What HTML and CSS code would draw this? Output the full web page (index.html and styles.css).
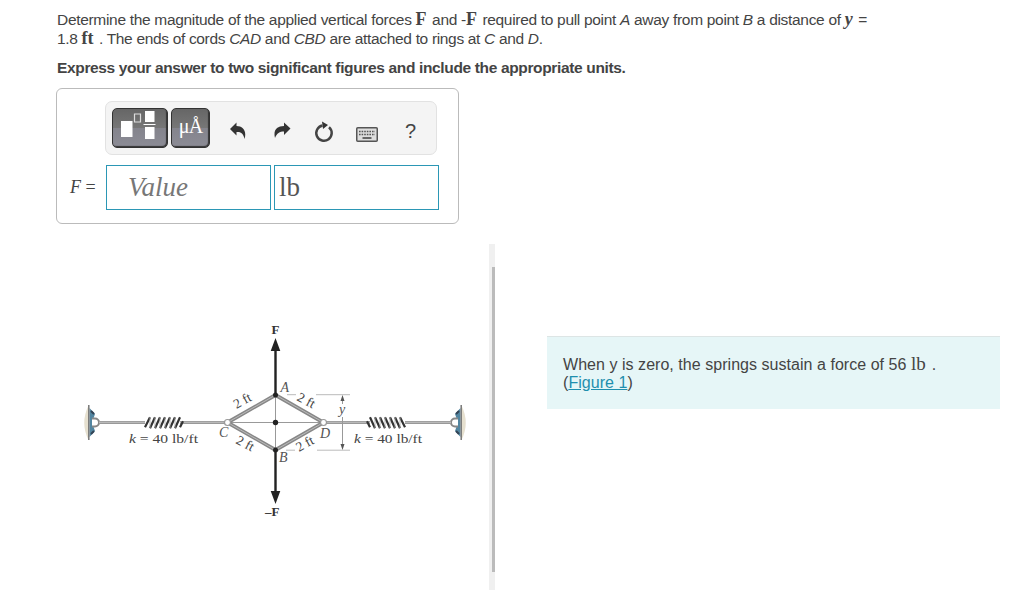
FILE: index.html
```html
<!DOCTYPE html>
<html lang="en">
  <head>
    <meta charset="UTF-8" />
    <meta name="viewport" content="width=device-width, initial-scale=1.0" />
    <title>Spring forces</title>
    <link rel="stylesheet" href="styles.css">
  </head>
  <body>
    <main>
      <section class="question">
        <p class="line1">Determine the magnitude of the applied vertical forces <b class="math">F</b> and -<b class="math">F</b> required to pull point <i>A</i> away from point <i>B</i> a distance of <b class="math"><i>y</i></b> =</p>
        <p class="line2">1.8 <b class="math">ft</b> . The ends of cords <i>CAD</i> and <i>CBD</i> are attached to rings at <i>C</i> and <i>D</i>.</p>
        <p class="express">Express your answer to two significant figures and include the appropriate units.</p>
      </section>
      <section class="answer">
        <div class="toolbar">
          <button class="dark template" aria-label="templates">
            <svg width="54" height="38" viewBox="0 0 54 38">
              <path fill="#fff" d="M8 12h11.500v16H8zM32 2h9.500v11h-9.500zM32 18h9.500v12h-9.500zM30.500 15h12v1h-12z" />
              <path fill="none" stroke="#ddd" stroke-width="1.200" d="M21.500 5h6v8h-6z" />
            </svg>
          </button>
          <button class="dark units">μÅ</button>
          <button class="tool undo" aria-label="undo">
            <svg width="16" height="18" viewBox="0 0 16 18"><path d="M0 7 6.500 0.500V4C13 4 17 9 14.500 17 13.500 11.500 11 9.500 6.500 10v3.500z" /></svg>
          </button>
          <button class="tool redo" aria-label="redo">
            <svg width="17" height="17" viewBox="0 0 17 17"><path d="M16.500 6.500 10 .5V4C3 4-1 8 1 16 3 11 5.500 9.500 10 9.500V13z" /></svg>
          </button>
          <button class="tool reset" aria-label="reset">
            <svg width="20" height="22" viewBox="0 0 20 22">
              <path fill="none" stroke="#444" stroke-width="2.500" d="M15 6.200A7.700 7.700 0 1 1 8.500 4.500" />
              <path d="m8 .5 6 3.500-5 4z" />
            </svg>
          </button>
          <button class="tool keys" aria-label="keyboard">
            <svg width="22" height="15" viewBox="0 0 22 15">
              <rect x=".75" y=".75" width="20.500" height="13.500" rx="1" fill="#ddd" stroke="#555" stroke-width="1.500" />
              <path fill="none" stroke="#555" stroke-width="1.600" stroke-dasharray="1.600 1" d="M3 4.500h16M3 7.500h16" />
              <path fill="none" stroke="#666" stroke-width="2" d="M6.500 11h9" />
            </svg>
          </button>
          <button class="tool help">?</button>
        </div>
        <div class="fields">
          <span class="label"><i>F</i> =</span>
          <div class="field value">Value</div>
          <div class="field lb">lb</div>
        </div>
      </section>
      <section class="lower">
        <div class="figure">
          <svg width="433" height="346" viewBox="56 244 433 346">
            <defs>
              <g id="wall">
                <path d="M88.500 405.500Q80 423 88.500 440z" fill="#e6e0cf" />
                <path d="M89.500 408 95 414 92 422.500 95 431 89.500 437z" fill="#5285a0" />
                <path d="M88.800 405v35" stroke="#777" stroke-width="1.500" />
                <path d="M92 418.500h3a4 4 0 0 1 0 8h-3" fill="#fff" stroke="#888" stroke-width="2" />
                <path d="m91 411 3 3M91 434l3-3" stroke="#345" stroke-width="2" />
              </g>
              <g id="spring">
                <path d="M99 422.500h46M180 422.500h45" stroke="#999" stroke-width="2.800" />
                <path d="M99 422.300h46M180 422.300h45" stroke="#ccc" stroke-width=".8" />
                <path d="m145 427 5-10m0 11 5-11m0 11 5-11m0 11 5-11m0 11 5-11m0 11 5-11m0 11 5-11m0 10 3-6" stroke="#333" stroke-width="2.200" transform="translate(0 .3)" />
                <path d="m150 417 0 11m5-11 0 11m5-11 0 11m5-11 0 11m5-11 0 11m5-11 0 11" stroke="#aaa" stroke-width=".8" />
              </g>
            </defs>
            <use href="#wall" />
            <use href="#spring" />
            <use href="#wall" transform="matrix(-1 0 0 1 550 0)" />
            <use href="#spring" transform="matrix(-1 0 0 1 550 0)" />
            <path d="M228 422.500h96M275.500 394v56" stroke="#999" />
            <path d="M287 394.700h9M316 394.700h34M286 450.200h9M317 450.200h33" stroke="#bbb" />
            <path d="M342.500 399v5M342.500 417v29" stroke="#999" />
            <path d="m340.500 401 2-6 2 6zM340.500 444l2 6 2-6z" fill="#555" />
            <path d="M227.500 422.500 275.500 395l48 27.500-48 27.500z" fill="none" stroke="#888" stroke-width="3.800" />
            <path d="M227.500 422.500 275.500 395l48 27.500-48 27.500z" fill="none" stroke="#bbb" stroke-width="1" />
            <path d="M275.500 395v-47M275.500 450v45" stroke="#222" stroke-width="2.400" />
            <path d="m270.700 351 4.800-13 4.800 13zM270.700 491l4.800 13 4.800-13z" fill="#222" />
            <g fill="#222"><circle cx="275.500" cy="395" r="2.500" /><circle cx="275.500" cy="422.500" r="2.700" /><circle cx="275.500" cy="450" r="2.500" /></g>
            <g fill="#fff" stroke="#999" stroke-width="1.200"><circle cx="227.500" cy="422.500" r="3" /><circle cx="323.500" cy="422.500" r="3" /></g>
            <g class="names">
              <text x="280.500" y="391.500">A</text>
              <text x="279" y="462">B</text>
              <text x="219" y="437">C</text>
              <text x="320" y="438">D</text>
              <text x="339" y="414">y</text>
            </g>
            <g class="sizes">
              <text transform="translate(236.500 409) rotate(-29)">2 ft</text>
              <text transform="translate(296 400) rotate(28)">2 ft</text>
              <text transform="translate(235 443) rotate(28)">2 ft</text>
              <text transform="translate(299 452) rotate(-29)">2 ft</text>
              <text x="129" y="442.500" textLength="69" lengthAdjust="spacingAndGlyphs"><tspan font-style="italic">k</tspan> = 40 lb/ft</text>
              <text x="354" y="442.500" textLength="68" lengthAdjust="spacingAndGlyphs"><tspan font-style="italic">k</tspan> = 40 lb/ft</text>
            </g>
            <g class="forces">
              <text x="271.500" y="333.500">F</text>
              <text x="265" y="515.500">–F</text>
            </g>
          </svg>
          <div class="scrollbar"><div class="thumb"></div></div>
        </div>
        <aside class="info">
          <p>When y is zero, the springs sustain a force of 56 <span class="math">lb</span> .</p>
          <p>(<a href="#">Figure 1</a>)</p>
        </aside>
      </section>
    </main>
  </body>
</html>
```
FILE: styles.css
```css
* {
  margin: 0;
  padding: 0;
  box-sizing: border-box;
}
body {
  background-color: white;
  color: #444;
  font-family: "Liberation Sans", Arial, sans-serif;
  font-size: 15.5px;
  overflow: hidden;
}
main {
  padding: 10px 0 0 56px;
}
p {
  height: 19px;
  line-height: 19px;
  white-space: nowrap;
}
.question {
  height: 78px;
  padding-left: 1px;
}
.math {
  margin-right: 1.5px;
  font-family: "Liberation Serif", serif;
  font-size: 18px;
  line-height: 1;
  letter-spacing: 0;
}
.line1 {
  letter-spacing: -0.31px;
}
.line2 {
  letter-spacing: -0.33px;
}
.express {
  margin-top: 10px;
  font-weight: bold;
  letter-spacing: -0.35px;
}
.answer {
  width: 403px;
  height: 136px;
  padding: 12px 0 0 13px;
  border: 1.5px solid #bbb;
  border-radius: 6px;
}
.toolbar {
  display: flex;
  align-items: center;
  width: 332px;
  height: 54px;
  margin-left: 35px;
  padding-left: 6px;
  border: 1px solid #e2e2e2;
  border-radius: 7px;
  background-color: #f4f4f4;
}
button {
  border: none;
  background: none;
}
.dark {
  height: 40px;
  border: 1px solid #333;
  border-radius: 5px;
  background: linear-gradient(#666 0%, #777 50%, #84848c 51%, #8c8c96 100%);
  box-shadow: inset -1px -1px 1px #333;
  color: #fff;
}
.template {
  width: 56px;
  margin-right: 3px;
}
.units {
  width: 39px;
  padding-bottom: 4px;
  font-family: "Liberation Serif", serif;
  font-size: 20px;
  letter-spacing: -0.8px;
}
.dark svg,
.tool svg {
  display: block;
}
.tool {
  fill: #333;
}
.undo {
  margin: 6px 0 0 20px;
}
.redo {
  margin: 4px 0 0 28px;
}
.reset {
  margin: 8px 0 0 23px;
}
.keys {
  margin: 12px 0 0 22px;
}
.help {
  margin: 6px 0 0 27px;
  color: #444;
  font-family: "Liberation Sans", Arial, sans-serif;
  font-size: 20px;
}
.fields {
  display: flex;
  margin-top: 10px;
}
.label {
  width: 36px;
  padding-top: 12px;
  font-family: "Liberation Serif", serif;
  font-size: 18px;
}
.field {
  width: 165px;
  height: 45px;
  border: 1.5px solid #2b97b5;
  font-family: "Liberation Serif", serif;
  font-size: 27px;
  line-height: 43px;
}
.value {
  padding-left: 21px;
  color: #777;
  font-style: italic;
}
.lb {
  margin-left: 3px;
  padding-left: 4px;
  color: #555;
}
.lower {
  display: flex;
  margin-top: 20px;
}
.figure {
  display: flex;
}
.figure svg {
  display: block;
}
.scrollbar {
  width: 6px;
  height: 346px;
  padding: 23px 0 0 3px;
  background-color: #f0f0f0;
}
.thumb {
  height: 305px;
  background-color: #bbb;
}
.names {
  fill: #555;
  font: italic 14px "Liberation Serif", serif;
}
.sizes {
  fill: #444;
  font: 13.5px "Liberation Serif", serif;
}
.forces {
  fill: #333;
  font: bold 13px "Liberation Serif", serif;
}
.info {
  width: 453px;
  height: 73px;
  margin: 92px 0 0 52px;
  padding: 17px 0 0 16px;
  border-top: 1px solid #dde5e5;
  background-color: #e6f6f7;
  font-size: 16px;
  letter-spacing: 0.04px;
}
.info .math {
  font-size: 19px;
}
a {
  color: #1f8fae;
}
```
